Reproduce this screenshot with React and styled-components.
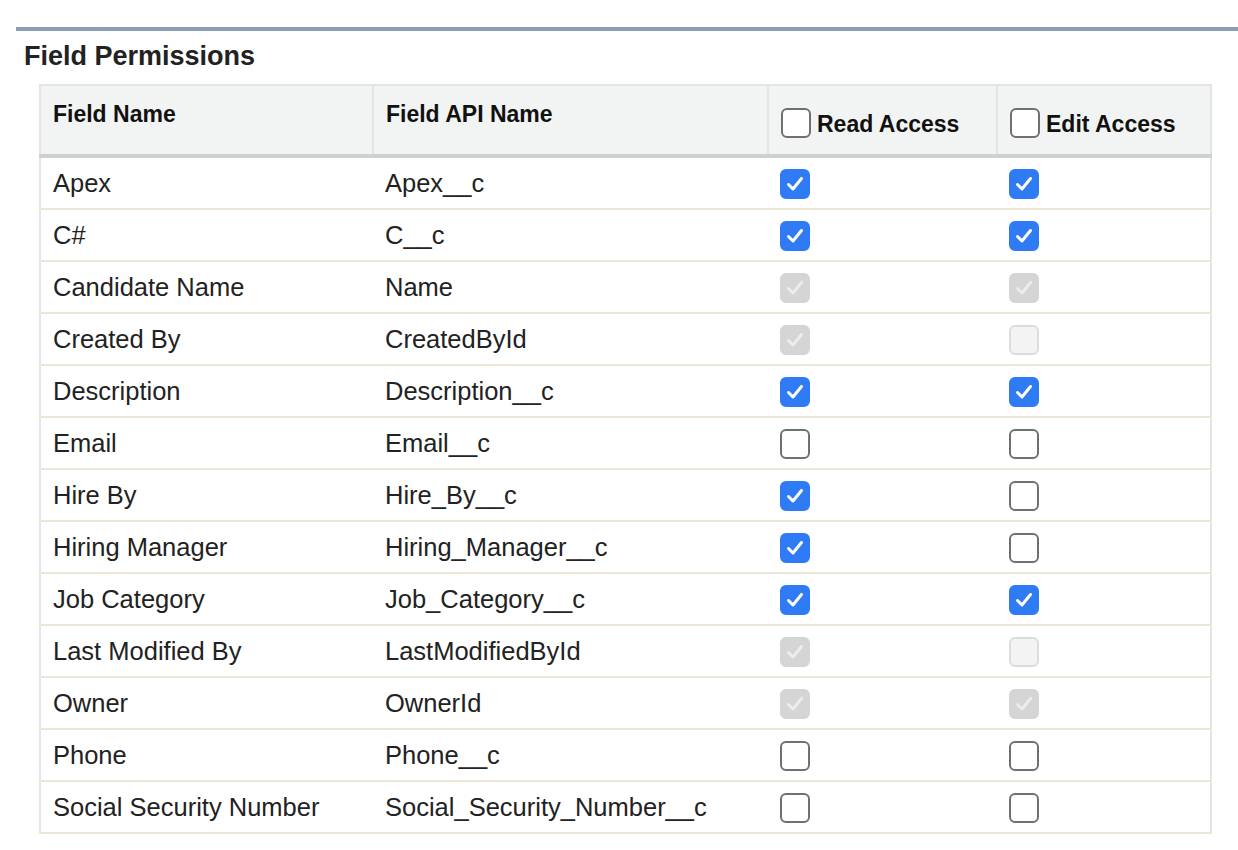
import React from 'react'
import styled, {createGlobalStyle} from 'styled-components'

const Global = createGlobalStyle`
  body { margin: 0; background: #fff; font-family: 'Liberation Sans', Arial, sans-serif; color: #222; }
`

const rows = [
  ['Apex', 'Apex__c', 'on', 'on'],
  ['C#', 'C__c', 'on', 'on'],
  ['Candidate Name', 'Name', 'lock', 'lock'],
  ['Created By', 'CreatedById', 'lock', 'dis'],
  ['Description', 'Description__c', 'on', 'on'],
  ['Email', 'Email__c', 'off', 'off'],
  ['Hire By', 'Hire_By__c', 'on', 'off'],
  ['Hiring Manager', 'Hiring_Manager__c', 'on', 'off'],
  ['Job Category', 'Job_Category__c', 'on', 'on'],
  ['Last Modified By', 'LastModifiedById', 'lock', 'dis'],
  ['Owner', 'OwnerId', 'lock', 'lock'],
  ['Phone', 'Phone__c', 'off', 'off'],
  ['Social Security Number', 'Social_Security_Number__c', 'off', 'off']
]

const Page = styled.div`
  padding: 27px 0 0 16px;
`
const Rule = styled.div`
  height: 4px;
  background: #8e9bb9;
`
const Title = styled.h2`
  margin: 0 0 0 8px;
  padding-top: 10px;
  font-size: 27px;
  font-weight: 700;
  color: #222;
  height: 53px;
  box-sizing: border-box;
`
const Table = styled.table`
  margin-left: 23px;
  width: 1173px;
  table-layout: fixed;
  border-collapse: collapse;
  border: 2px solid #e2e4e6;
  font-size: 25.5px;
`
const Th = styled.th`
  background: #f2f3f3;
  text-align: left;
  font-weight: 700;
  font-size: 23px;
  color: #111;
  height: 56px;
  padding: 0 12px;
  vertical-align: ${p => (p.box ? 'bottom' : 'middle')};
  padding-bottom: ${p => (p.box ? '10px' : '12px')};
  border-left: 2px solid #e2e4e6;
  border-bottom: 4px solid #cfd0d1;
  width: ${p => (p.w ? p.w + 'px' : 'auto')};
  white-space: nowrap;
`
const Td = styled.td`
  height: 50px;
  padding: 0 12px;
  color: #222;
  border-bottom: 2px solid #ede8d5;
  vertical-align: middle;
  white-space: nowrap;
`
const HeadLabel = styled.span`
  display: inline-flex;
  align-items: flex-end;
  gap: 6px;
`
const Box = styled.span`
  display: inline-flex;
  align-items: center;
  justify-content: center;
  box-sizing: border-box;
  width: 30px;
  height: 30px;
  border-radius: 6px;
  vertical-align: middle;
  background: ${p => ({on: '#2f7bf5', lock: '#d5d5d5', dis: '#f3f3f3', off: '#fff'})[p.state]};
  border: 2px solid ${p => ({on: '#2f7bf5', lock: '#d5d5d5', dis: '#dcdcdc', off: '#707070'})[p.state]};
`

const Check = ({state}) => (
  <Box state={state}>
    {(state === 'on' || state === 'lock') && (
      <svg width="20" height="20" viewBox="0 0 20 20">
        <path d="M3.5 10.5 L8 15 L16.5 4.5" fill="none" stroke={state === 'on' ? '#fff' : '#ececec'} strokeWidth="3" strokeLinecap="round" strokeLinejoin="round" />
      </svg>
    )}
  </Box>
)

export default function App() {
  return (
    <Page>
      <Global />
      <Rule />
      <Title>Field Permissions</Title>
      <Table>
        <colgroup>
          <col style={{width: 333}} />
          <col style={{width: 395}} />
          <col style={{width: 229}} />
          <col />
        </colgroup>
        <thead>
          <tr>
            <Th>Field Name</Th>
            <Th>Field API Name</Th>
            <Th box>
              <HeadLabel><Check state="off" />Read Access</HeadLabel>
            </Th>
            <Th box>
              <HeadLabel><Check state="off" />Edit Access</HeadLabel>
            </Th>
          </tr>
        </thead>
        <tbody>
          {rows.map(r => (
            <tr key={r[0]}>
              <Td>{r[0]}</Td>
              <Td>{r[1]}</Td>
              <Td><Check state={r[2]} /></Td>
              <Td><Check state={r[3]} /></Td>
            </tr>
          ))}
        </tbody>
      </Table>
    </Page>
  )
}
